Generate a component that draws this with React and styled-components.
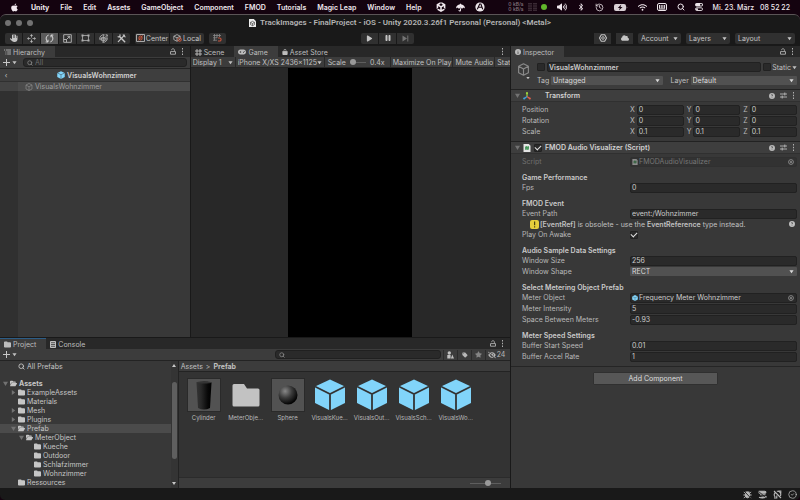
import React, { useId } from 'react';
import styled, { createGlobalStyle } from 'styled-components';
import {
  FaApple,
  FaBagShopping,
  FaBluetoothB,
  FaCircleInfo,
  FaCircleQuestion,
  FaCloud,
  FaEyeSlash,
  FaFolder,
  FaFolderOpen,
  FaGamepad,
  FaHand,
  FaPause,
  FaPlay,
  FaStar,
  FaTag,
  FaUmbrella,
  FaUnity,
  FaVolumeHigh,
  FaWifi,
} from 'react-icons/fa6';
import { CircleCheck, History, Search } from 'lucide-react';

const GlobalStyle = createGlobalStyle`
  * { box-sizing: border-box; }

  body {
    margin: 0;
    background: #14030f;
    color: #c0c0c0;
    font: 400 7px/9px Inter, "Liberation Sans", sans-serif;
  }

  button, input, select {
    margin: 0;
    padding: 0;
    border: 0;
    background: none;
    color: inherit;
    font: inherit;
  }

  ul { margin: 0; padding: 0; list-style: none; }

  h2, h3 { margin: 0; font: inherit; }

  svg { display: block; flex: none; }
`;

const Screen = styled.div`
  display: flex;
  flex-direction: column;
  height: 100vh;
  overflow: hidden;
`;

const MenuBar = styled.header`
  display: flex;
  align-items: center;
  justify-content: space-between;
  height: 14px;
  flex: none;
  padding: 0 10px;
  color: #f0e8ee;
  font-weight: 500;
  white-space: nowrap;
`;

const Menus = styled.nav`
  display: flex;
  align-items: center;
  gap: 11px;
`;

const MenuList = styled.div`
  display: flex;
  align-items: center;
  gap: 11px;
  padding-left: 1px;
`;

const MenuExtras = styled.div`
  display: flex;
  align-items: center;
  gap: 10px;
  padding-left: 3px;
`;

const MenuItem = styled.button`
  font-weight: ${({ $bold }) => ($bold ? 700 : 600)};
`;

const StatusItems = styled.div`
  display: flex;
  align-items: center;
  gap: 10px;
`;

const NetworkStatus = styled.div`
  display: flex;
  align-items: center;
  gap: 4px;
`;

const Traffic = styled.span`
  color: #86767f;
  font-size: 5px;
  line-height: 5px;
`;

const GreenDot = styled.span`
  width: 6px;
  height: 6px;
  border-radius: 50%;
  background: #61b52b;
`;

const Clock = styled.span`
  display: flex;
  gap: 6px;
`;

const Window = styled.main`
  display: flex;
  flex-direction: column;
  flex: 1;
  min-height: 0;
  border-top: 1px solid #5b5557;
  border-radius: 6px 6px 5px 5px;
  background: #191919;
  overflow: hidden;
`;

const TitleBar = styled.div`
  display: grid;
  grid-template-columns: 1fr auto 1fr;
  align-items: center;
  height: 15px;
  flex: none;
  padding: 0 5px;
`;

const Lights = styled.div`
  display: flex;
  gap: 5px;
`;

const Light = styled.span`
  width: 6px;
  height: 6px;
  border-radius: 50%;
  background: #727272;
`;

const Title = styled.div`
  display: flex;
  align-items: center;
  gap: 4px;
  color: #b4b4b4;
  font: 600 8px/10px Roboto, "Liberation Sans", sans-serif;
  white-space: nowrap;
`;

const Toolbar = styled.div`
  display: grid;
  grid-template-columns: minmax(0, 357fr) auto minmax(0, 382fr);
  align-items: center;
  height: 16px;
  flex: none;
  padding: 0 5px;
`;

const ToolSide = styled.div`
  display: flex;
  align-items: center;
  justify-content: ${({ $end }) => ($end ? 'flex-end' : 'flex-start')};
  gap: 5px;
`;

const ToolGroup = styled.div`
  display: flex;
  gap: 1px;
  border-radius: 2px;
  overflow: hidden;
`;

const ToolButton = styled.button`
  display: flex;
  align-items: center;
  justify-content: ${({ $menu }) => ($menu ? 'space-between' : 'center')};
  gap: 1px;
  width: ${({ $width }) => $width || 17}px;
  height: 11px;
  padding: 0 ${({ $menu }) => ($menu ? 3 : 0)}px;
  border-radius: ${({ $menu }) => ($menu ? 2 : 0)}px;
  background: ${({ $active }) => ($active ? '#5c5c5c' : '#303030')};
  color: ${({ $dim }) => ($dim ? '#747474' : '#c4c4c4')};
`;

const Workspace = styled.div`
  display: grid;
  grid-template-columns: minmax(0, 510fr) minmax(0, 289fr);
  gap: 1px;
  flex: 1;
  min-height: 0;
`;

const LeftSide = styled.div`
  display: grid;
  grid-template-rows: minmax(0, 291fr) minmax(0, 150fr);
  gap: 1px;
  min-height: 0;
`;

const TopPanels = styled.div`
  display: grid;
  grid-template-columns: minmax(0, 190fr) minmax(0, 320fr);
  gap: 1px;
  min-height: 0;
`;

const Panel = styled.section`
  display: flex;
  flex-direction: column;
  min-width: 0;
  min-height: 0;
  background: #383838;
  overflow: hidden;
`;

const TabBar = styled.div`
  display: flex;
  align-items: stretch;
  height: 11px;
  flex: none;
  background: #282828;
`;

const Tab = styled.button`
  display: flex;
  align-items: center;
  gap: 2px;
  padding: 0 10px 0 4px;
  border-top: 1px solid ${({ $focused }) => ($focused ? '#2c5d87' : 'transparent')};
  background: ${({ $active }) => ($active ? '#3c3c3c' : 'transparent')};
  color: #bdbdbd;
`;

const TabActions = styled.div`
  display: flex;
  align-items: center;
  gap: 5px;
  margin-left: auto;
  padding-right: 6px;
`;

const PanelBar = styled.div`
  display: flex;
  align-items: center;
  gap: ${({ $gap }) => $gap || 0}px;
  height: ${({ $tall }) => ($tall ? 12 : 11)}px;
  flex: none;
  padding: 0 ${({ $pad }) => $pad || 0}px;
  border-bottom: 1px solid #232323;
  background: #3c3c3c;
`;

const AddButton = styled.button`
  display: flex;
  align-items: center;
  gap: 2px;
  width: 16px;
`;

const SearchBox = styled.label`
  display: flex;
  align-items: center;
  gap: 2px;
  height: 9px;
  flex: ${({ $width }) => ($width ? `0 0 ${$width}` : 1)};
  margin-left: ${({ $width }) => ($width ? 'auto' : 0)};
  padding: 0 3px;
  border: 1px solid #202020;
  border-radius: 3px;
  background: #2a2a2a;
  color: #8c8c8c;

  input {
    width: 100%;
    min-width: 0;
    height: 7px;
    outline: none;
  }

  input::placeholder { color: #6a6a6a; opacity: 1; }
`;

const FilterButtons = styled.div`
  display: flex;
  padding-left: 2px;
`;

const FilterButton = styled.button`
  display: flex;
  align-items: center;
  justify-content: center;
  gap: 1px;
  width: ${({ $wide }) => ($wide ? 22 : 14)}px;
  height: 10px;
  border-left: 1px solid #2b2b2b;
  color: #b8b8b8;
`;

const PrefabHeader = styled.div`
  display: grid;
  grid-template-columns: 6px 1fr;
  align-items: center;
  height: 13px;
  flex: none;
  padding: 0 3px;
  background: #3e3e3e;
  border-bottom: 1px solid #303030;
`;

const PrefabName = styled.h2`
  display: flex;
  align-items: center;
  justify-content: center;
  gap: 2px;
  padding-right: 2px;
  color: #d2d2d2;
  font-weight: 600;
`;

const HierarchyBody = styled.div`
  flex: 1;
  background: linear-gradient(to right, #303030 18px, #383838 18px);
`;

const HierarchyRow = styled.button`
  display: flex;
  align-items: center;
  gap: 2px;
  width: 100%;
  height: 9px;
  padding-left: 25px;
  background: linear-gradient(to right, #434343 18px, #4b4b4b 18px);
  color: #a0a0a0;
`;

const BarSelectWrap = styled.span`
  display: flex;
  align-items: center;
  width: ${({ $width }) => $width}px;
  flex: none;
  height: 10px;
  padding: 0 2px;
  border-right: 1px solid #282828;

  select {
    flex: 1;
    min-width: 0;
    height: 9px;
    appearance: none;
    overflow: hidden;
    outline: none;
  }
`;

const ScaleControl = styled.label`
  display: flex;
  align-items: center;
  gap: 4px;
  width: 66px;
  height: 10px;
  flex: none;
  padding-left: 3px;
  border-right: 1px solid #282828;
`;

const Slider = styled.input`
  width: ${({ $width }) => $width}px;
  height: 7px;
  appearance: none;
  background: linear-gradient(#5e5e5e, #5e5e5e) center / 100% 1px no-repeat;

  &::-webkit-slider-thumb {
    appearance: none;
    width: 6px;
    height: 6px;
    border-radius: 50%;
    background: #999;
  }
`;

const BarToggle = styled.button`
  height: 10px;
  flex: none;
  padding: 0 1px 0 2px;
  border-right: 1px solid #282828;
  white-space: nowrap;
`;

const GameView = styled.div`
  display: flex;
  justify-content: center;
  flex: 1;
  min-height: 0;
  background: #282828;
`;

const GameScreen = styled.div`
  height: 100%;
  aspect-ratio: 1125 / 2436;
  background: #000;
`;

const ProjectBody = styled.div`
  display: grid;
  grid-template-columns: minmax(0, 178fr) minmax(0, 332fr);
  gap: 1px;
  flex: 1;
  min-height: 0;
  background: #232323;
`;

const TreePane = styled.div`
  display: grid;
  grid-template-columns: minmax(0, 1fr) 7px;
  min-height: 0;
  background: #383838;
`;

const Tree = styled.ul`
  padding-top: 1px;
  overflow: hidden;
`;

const TreeRow = styled.button`
  display: flex;
  align-items: center;
  gap: 2px;
  width: 100%;
  height: 9px;
  padding-left: ${({ $level }) => 2 + $level * 8}px;
  background: ${({ $selected }) => ($selected ? '#4b4b4b' : 'transparent')};
  color: #c6c6c6;
  font-weight: ${({ $bold }) => ($bold ? 700 : 400)};
`;

const FavouriteItem = styled.li`
  margin-bottom: 8px;
`;

const ArrowSlot = styled.span`
  display: flex;
  justify-content: center;
  width: 6px;
  color: #727272;
`;

const Scrollbar = styled.div`
  display: flex;
  flex-direction: column;
  align-items: center;
  padding: 3px 0;
  background: #343434;
`;

const ScrollTrack = styled.div`
  display: grid;
  grid-template-rows: 15fr 75fr 23fr;
  flex: 1;
  width: 5px;

  &::before { content: ''; }
`;

const ScrollThumb = styled.div`
  border-radius: 3px;
  background: #5f5f5f;
`;

const AssetPane = styled.div`
  display: flex;
  flex-direction: column;
  min-height: 0;
  background: #333;
`;

const AssetGrid = styled.div`
  display: flex;
  flex-wrap: wrap;
  align-content: flex-start;
  flex: 1;
  min-height: 0;
  padding: 6px 4px;
`;

const Asset = styled.button`
  display: flex;
  flex-direction: column;
  align-items: center;
  gap: 2px;
  width: 42px;
  color: #b9b9b9;
  font-size: 6px;
  line-height: 8px;
`;

const Thumb = styled.span`
  display: flex;
  align-items: center;
  justify-content: center;
  width: 34px;
  height: 34px;
  border: 1px solid ${({ $framed }) => ($framed ? '#2a2a2a' : 'transparent')};
  background: ${({ $framed }) => ($framed ? '#525252' : 'transparent')};
`;

const PaneFooter = styled.div`
  display: flex;
  align-items: center;
  justify-content: flex-end;
  height: 11px;
  flex: none;
  padding-right: 9px;
  border-top: 1px solid #2b2b2b;
  background: #3c3c3c;
`;

const ObjectHeader = styled.div`
  display: grid;
  grid-template-columns: 16px minmax(0, 1fr);
  gap: 7px;
  padding: 5px 3px 4px 3px;
  background: #3c3c3c;
`;

const ObjectRows = styled.div`
  display: flex;
  flex-direction: column;
  gap: 3px;
`;

const ObjectRow = styled.div`
  display: flex;
  align-items: center;
  gap: ${({ $gap }) => $gap || 2}px;
  height: 10px;
`;

const ObjectIcon = styled.div`
  display: flex;
  flex-direction: column;
  align-items: flex-end;
  padding-top: 1px;
`;

const StaticToggle = styled.label`
  display: flex;
  align-items: center;
  gap: 1px;
`;

const TextInput = styled.input`
  flex: 1;
  width: 100%;
  min-width: 0;
  height: 10px;
  padding: 0 1px;
  border: 1px solid #212121;
  border-radius: 2px;
  background: #2a2a2a;
  color: #cacaca;
  font-weight: ${({ $bold }) => ($bold ? 600 : 400)};
  outline: none;
`;

const Check = styled.input`
  display: grid;
  place-items: center;
  width: 8px;
  height: 8px;
  flex: none;
  border: 1px solid #212121;
  border-radius: 1px;
  appearance: none;
  background: #2a2a2a;

  &:checked::before {
    content: '';
    width: 5px;
    height: 3px;
    margin-bottom: 1px;
    border: solid #dedede;
    border-width: 0 0 1px 1px;
    rotate: -45deg;
  }
`;

const SelectWrap = styled.span`
  display: flex;
  align-items: center;
  flex: 1;
  min-width: 0;
  height: 9px;
  padding: 0 3px 0 2px;
  border-radius: 1px;
  background: #515151;
  color: #dadada;

  select {
    flex: 1;
    min-width: 0;
    height: 9px;
    appearance: none;
    outline: none;
  }
`;

const TagLabel = styled.label`
  width: ${({ $width }) => $width}px;
  flex: none;
`;

const TagCell = styled.div`
  display: flex;
  align-items: center;
  flex: ${({ $grow }) => $grow};
  min-width: 0;
`;

const ComponentHeader = styled.div`
  display: flex;
  align-items: center;
  gap: 3px;
  height: 13px;
  flex: none;
  padding: 0 5px 0 3px;
  border-top: 1px solid #222;
  border-bottom: 1px solid #303030;
  background: #3e3e3e;
`;

const ComponentTitle = styled.h2`
  padding-left: ${({ $indent }) => ($indent ? 11 : 0)}px;
  color: #d2d2d2;
  font-weight: 600;
`;

const HeaderActions = styled.div`
  display: flex;
  align-items: center;
  gap: 5px;
  margin-left: auto;
  color: #b8b8b8;
`;

const Fields = styled.div`
  display: flex;
  flex-direction: column;
  padding: 2px 3px 4px 11px;
`;

const FieldGroup = styled.div`
  margin-top: 5px;
`;

const GroupTitle = styled.h3`
  height: 10px;
  color: #cacaca;
  font-weight: 600;
  line-height: 11px;
`;

const Row = styled.div`
  display: grid;
  grid-template-columns: minmax(0, 108fr) minmax(0, 167fr);
  align-items: center;
  height: 11px;
  color: ${({ $disabled }) => ($disabled ? '#707070' : '#b8b8b8')};
`;

const VectorCells = styled.div`
  display: grid;
  grid-template-columns: repeat(3, minmax(0, 1fr));
  gap: 3px;

  label {
    display: flex;
    align-items: center;
    gap: 2px;
  }
`;

const ObjectField = styled.div`
  display: flex;
  align-items: center;
  height: 10px;
  padding: 0 2px 0 1px;
  border: 1px solid ${({ $disabled }) => ($disabled ? '#303030' : '#212121')};
  border-radius: 2px;
  background: ${({ $disabled }) => ($disabled ? '#323232' : '#2a2a2a')};

  input {
    flex: 1;
    min-width: 0;
    height: 8px;
    padding-left: 1px;
    color: ${({ $disabled }) => ($disabled ? '#777' : '#cacaca')};
    outline: none;
  }
`;

const Notice = styled.p`
  display: flex;
  align-items: center;
  gap: 1px;
  height: 10px;
  margin: 0;
  padding-left: 8px;
  color: #c0c0c0;

  b { font-weight: 600; }

  > svg:last-child { margin-left: auto; margin-right: 2px; }
`;

const AddArea = styled.div`
  display: flex;
  justify-content: center;
  padding: 5px;
  border-top: 1px solid #252525;
`;

const AddComponentButton = styled.button`
  width: 45%;
  height: 13px;
  border: 1px solid #303030;
  border-radius: 1px;
  background: #575757;
  color: #dedede;
`;

const StatusBar = styled.footer`
  display: flex;
  align-items: center;
  justify-content: flex-end;
  gap: 6px;
  height: 12px;
  flex: none;
  padding: 0 3px;
  color: #b8b8b8;
`;

const Caret = ({ size = 5 }) => (
  <svg width={size} height={size} viewBox="0 0 6 6" fill="currentColor">
    <path d="M0.5 1.5h5L3 5z" />
  </svg>
);

const Fold = ({ open }) => (
  <svg width="5" height="5" viewBox="0 0 6 6" fill="currentColor">
    <path d={open ? 'M0 1h6L3 6z' : 'M1 0l4 3-4 3z'} />
  </svg>
);

const Dots = () => (
  <svg width="3" height="7" viewBox="0 0 3 7" fill="#b0b0b0">
    <path d="M1 0h1v1.4H1zM1 2.8h1v1.4H1zM1 5.6h1V7H1z" />
  </svg>
);

const Lock = () => (
  <svg width="6" height="7" viewBox="0 0 6 7" fill="none" stroke="#b0b0b0" strokeWidth="0.9">
    <path d="M1.6 2.2C1.6 0.2 4.4 0.2 4.4 2.2V3.5M0.5 3.6h5v2.6h-5z" />
  </svg>
);

const Plus = () => (
  <svg width="7" height="7" viewBox="0 0 7 7" stroke="#c8c8c8" strokeWidth="1">
    <path d="M3.5 0v7M0 3.5h7" />
  </svg>
);

const CubeSolid = ({ size = 8, gap = '#383838' }) => (
  <svg width={size} height={size} viewBox="0 0 32 32">
    <path d="M16 0.5L31 7.5V24L16 31.5 1 24V7.5z" fill="#81d4fa" />
    <path d="M1 7.5L16 15 31 7.5M16 15v17" fill="none" stroke={gap} strokeWidth="1.8" />
  </svg>
);

const CubeOutline = ({ size = 8, color = '#8a8a8a' }) => (
  <svg width={size} height={size} viewBox="0 0 16 16" fill="none" stroke={color} strokeWidth="1.4" strokeLinejoin="round">
    <path d="M8 1l6 3v8l-6 3-6-3V4zM2 4l6 3.5 6-3.5M8 7.5V15" />
  </svg>
);

const ListIcon = () => (
  <svg width="7" height="6" viewBox="0 0 7 6" stroke="#b8b8b8" strokeWidth="0.9">
    <path d="M0 1h1.2M2 1h5M1.4 3h1M3.2 3H7M1.4 5h1M3.2 5H7" />
  </svg>
);

const HashIcon = () => (
  <svg width="7" height="7" viewBox="0 0 7 7" stroke="#c0c0c0" strokeWidth="0.9">
    <path d="M2 0v7M5 0v7M0 2h7M0 5h7" />
  </svg>
);

const ConsoleIcon = () => (
  <svg width="6" height="7" viewBox="0 0 6 7">
    <rect width="6" height="7" rx="0.8" fill="#c0c0c0" />
    <path d="M1 1.7h4M1 3.5h4M1 5.3h4" stroke="#3a3a3a" strokeWidth="0.8" />
  </svg>
);

const DocIcon = () => (
  <svg width="7" height="8" viewBox="0 0 7 8">
    <path d="M0 0h4.8L7 2.2V8H0z" fill="#ededed" />
    <path d="M3.5 2.3L5.5 3.4v2.2l-2 1.1-2-1.1V3.4zM1.5 3.4l2 1.1 2-1.1M3.5 4.5v2.2" fill="none" stroke="#333" strokeWidth="0.6" />
  </svg>
);

const ScriptIcon = ({ size = 8, dim }) => (
  <svg width={size} height={size} viewBox="0 0 8 8" opacity={dim ? 0.5 : 1}>
    <path d="M0.5 0h5.3L7.5 1.7V8h-7z" fill="#e4e4e4" />
    <path d="M3.3 2L2.9 6M5.2 2L4.8 6M2 3.3h4M2 4.8h4" stroke="#2c8a45" strokeWidth="0.9" />
  </svg>
);

const MoveToolIcon = () => (
  <svg width="9" height="9" viewBox="0 0 9 9" fill="#b8b8b8">
    <path d="M4.5 0L6 1.9H3zM4.5 9L6 7.1H3zM0 4.5L1.9 3v3zM9 4.5L7.1 3v3z" />
    <path d="M4.5 1.8v1.7M4.5 5.5v1.7M1.8 4.5h1.7M5.5 4.5h1.7" stroke="#b8b8b8" strokeWidth="0.8" />
  </svg>
);

const RotateToolIcon = () => (
  <svg width="9" height="9" viewBox="0 0 9 9" fill="none" stroke="#e0e0e0" strokeWidth="1">
    <path d="M3.6 1.1C0.6 2 0.5 6 2.6 7.6M5.4 7.9C8.4 7 8.5 3 6.4 1.4" />
    <path d="M0.7 7.9h2.3V5.7M8.3 1.1H6v2.2" />
  </svg>
);

const ScaleToolIcon = () => (
  <svg width="9" height="9" viewBox="0 0 9 9" fill="none" stroke="#b8b8b8" strokeWidth="0.9">
    <path d="M0.7 0.7h7.6v7.6H0.7z" />
    <path d="M0.7 5.5h2.8v2.8M3.5 5.5L6.6 2.4M4.4 2.3h2.3v2.3" />
  </svg>
);

const RectToolIcon = () => (
  <svg width="9" height="8" viewBox="0 0 9 8" fill="none" stroke="#b0b0b0" strokeWidth="0.8">
    <path d="M1.5 1.5h6v5h-6z" />
    <path d="M0.5 0.5h2v2h-2zM6.5 0.5h2v2h-2zM0.5 5.5h2v2h-2zM6.5 5.5h2v2h-2z" fill="#b0b0b0" stroke="none" />
  </svg>
);

const TransformToolIcon = () => (
  <svg width="9" height="9" viewBox="0 0 9 9" fill="none" stroke="#b8b8b8" strokeWidth="0.8">
    <path d="M1.2 6.2A3.7 3.7 0 0 1 5.8 1M7.8 2.8A3.7 3.7 0 0 1 3.2 8" />
    <path d="M2.6 3.4h3.5v3.2H2.6zM4.3 0.5v8M0.6 4.9h7.8M6.1 3.4l2.2-2.3M6.5 0.8h1.8v1.8" />
  </svg>
);

const CrossedTools = () => (
  <svg width="9" height="9" viewBox="0 0 9 9" stroke="#c6c6c6" fill="none" strokeLinecap="round">
    <path d="M2.5 2.5L7.7 7.7" strokeWidth="1.5" />
    <path d="M7.5 1.2L1.3 7.6" strokeWidth="1.2" />
    <path d="M1 2.7a1.5 1.5 0 0 0 2-1.9M6.2 0.9l1.9 1.9" strokeWidth="1.1" />
  </svg>
);

const PivotIcon = () => (
  <svg width="9" height="8" viewBox="0 0 9 8" fill="none">
    <path d="M0.5 0.5h8v7h-8z" stroke="#b8b8b8" strokeWidth="0.9" />
    <ellipse cx="4.5" cy="4" rx="1.6" ry="2" stroke="#dc5a3c" strokeWidth="0.9" />
    <path d="M2.6 6.4l4-5" stroke="#dc5a3c" strokeWidth="0.8" />
  </svg>
);

const LocalIcon = () => (
  <svg width="9" height="8" viewBox="0 0 9 8" fill="none">
    <path d="M4 0.6l3.2 1.6v3L4 7.3 0.8 5.6V2.2zM0.8 2.2L4 3.8l3.2-1.6M4 3.8v3.4" stroke="#b8b8b8" strokeWidth="0.8" />
    <circle cx="6.6" cy="5.6" r="1.7" stroke="#dc5a3c" strokeWidth="0.9" />
  </svg>
);

const SnapIcon = () => (
  <svg width="9" height="8" viewBox="0 0 9 8" fill="none">
    <path d="M1.5 0v6.5M4 0v4M6.5 0v3M0 1.5h8M0 3.8h4M0 6.2h4" stroke="#8a8a8a" strokeWidth="0.8" />
    <path d="M5 4h1.6a1.5 1.5 0 0 1 0 3H5" stroke="#c8533a" strokeWidth="1.1" />
  </svg>
);

const StepIcon = () => (
  <svg width="7" height="7" viewBox="0 0 7 7" fill="currentColor">
    <path d="M0.5 0.5L5 3.5l-4.5 3zM5.3 0.5h1v6h-1z" />
  </svg>
);

const CollabIcon = () => (
  <svg width="8" height="8" viewBox="0 0 8 8" fill="none" stroke="currentColor">
    <path d="M2.3 0.7h3.4L7.5 4 5.7 7.3H2.3L0.5 4z" strokeWidth="1.1" />
    <circle cx="4" cy="4" r="1.3" strokeWidth="0.9" />
  </svg>
);

const AxesIcon = () => (
  <svg width="8" height="8" viewBox="0 0 8 8">
    <path d="M4 4.5V1" stroke="#9bd43b" strokeWidth="1.2" />
    <path d="M4 4.5L6.7 6.4" stroke="#e5604a" strokeWidth="1.2" />
    <path d="M4 4.5L1.3 6.4" stroke="#3fa2dd" strokeWidth="1.2" />
    <circle cx="4" cy="1.2" r="1.1" fill="#9bd43b" />
    <circle cx="6.8" cy="6.5" r="1.1" fill="#e5604a" />
    <circle cx="1.2" cy="6.5" r="1.1" fill="#3fa2dd" />
  </svg>
);

const PresetIcon = () => (
  <svg width="7" height="7" viewBox="0 0 7 7" stroke="#b8b8b8" strokeWidth="0.9">
    <path d="M0 2h7M0 5h7M4.8 0.5v3M2.2 3.5v3" />
  </svg>
);

const PickerIcon = () => (
  <svg width="6" height="6" viewBox="0 0 6 6" fill="none" stroke="#9a9a9a" strokeWidth="0.8">
    <circle cx="3" cy="3" r="2.4" />
    <circle cx="3" cy="3" r="0.6" fill="#9a9a9a" />
  </svg>
);

const WarningIcon = () => (
  <svg width="9" height="9" viewBox="0 0 9 9">
    <rect width="9" height="9" rx="2" fill="#e5ce3c" />
    <path d="M4 1.5h1.2v3.8H4zM4 6.3h1.2v1.3H4z" fill="#4b430f" />
  </svg>
);

const FmodIcon = () => (
  <svg width="10" height="10" viewBox="0 0 10 10">
    <circle cx="5" cy="5" r="4.6" fill="#ece6ea" />
    <path d="M2.3 7.3L4.7 2h1.2l1.8 5.3M3.8 5.2h3" fill="none" stroke="#14030f" strokeWidth="1.1" />
  </svg>
);

const GridDots = () => (
  <svg width="9" height="8" viewBox="0 0 9 8" stroke="#5a4a54" strokeDasharray="1.5 0.7">
    <path d="M1 0v8M3 0v8M6 0v8M8 0v8" strokeWidth="1.1" />
  </svg>
);

const BatteryIcon = () => (
  <svg width="14" height="7" viewBox="0 0 14 7">
    <rect x="0" y="0" width="12" height="7" rx="2" fill="#d8d0d5" />
    <path d="M12.7 2.2Q14 3.5 12.7 4.8z" fill="#d8d0d5" />
    <path d="M7.3 0.5L3.8 4h2L4.9 6.6 8.5 3.1h-2z" fill="#14030f" />
  </svg>
);

const KeyboardBox = () => (
  <svg width="10" height="8" viewBox="0 0 10 8">
    <rect x="0.5" y="0.5" width="9" height="7" rx="1.5" fill="none" stroke="#ece6ea" />
    <path d="M2.5 2v3.5M4.2 2v3.5M5.9 2v3.5M7.6 2v3.5M2 6h6" stroke="#ece6ea" />
  </svg>
);

const ControlCenter = () => (
  <svg width="8" height="8" viewBox="0 0 8 8">
    <rect x="0" y="0" width="8" height="3.5" rx="1.7" fill="#ece6ea" />
    <circle cx="6" cy="1.75" r="1" fill="#14030f" />
    <rect x="0.5" y="4.8" width="7" height="2.7" rx="1.3" fill="none" stroke="#ece6ea" strokeWidth="0.9" />
    <circle cx="2" cy="6.15" r="1" fill="#ece6ea" />
  </svg>
);

const ShapesIcon = () => (
  <svg width="7" height="8" viewBox="0 0 7 8" fill="#c0c0c0">
    <circle cx="2.3" cy="2" r="1.7" />
    <path d="M0.3 3.9h3.3v3.6H0.3zM5.3 3.5L7 7.5H3.9z" />
  </svg>
);

const BugMuted = () => (
  <svg width="9" height="9" viewBox="0 0 9 9" fill="none" stroke="currentColor" strokeWidth="0.9">
    <ellipse cx="4.5" cy="4.8" rx="2.3" ry="3" fill="currentColor" />
    <path d="M0.8 2l1.8 1.2M8.2 2L6.4 3.2M0.3 5h2M8.7 5h-2M0.8 8l1.8-1.4M8.2 8L6.4 6.6M3 1.4l0.7 0.8M6 1.4l-0.7 0.8" />
    <path d="M1.2 1.2l6.6 6.9" stroke="#191919" />
  </svg>
);

const CacheMuted = () => (
  <svg width="9" height="9" viewBox="0 0 9 9" fill="none" stroke="currentColor" strokeWidth="1.1">
    <path d="M1.2 1.2h5.5q1.2 0 1.2 1t-1.2 1H2q-1 0-1-1zM2 4.8h5.5M1 7.2q3 1.5 7 0V6" fill="currentColor" />
    <path d="M0.8 1.7l7 5.8" stroke="#191919" strokeWidth="0.8" />
  </svg>
);

const RefreshMuted = () => (
  <svg width="9" height="9" viewBox="0 0 9 9" fill="none" stroke="currentColor" strokeWidth="1.1">
    <path d="M2.2 7A3.2 3.2 0 0 1 2 2.8M3.8 1.3A3.2 3.2 0 0 1 7.3 6M5.2 1h2.6v2.5M1 8h2.8V5.5M1 1l7 7" />
  </svg>
);

const CylinderPreview = () => (
  <svg width="32" height="32" viewBox="0 0 32 32">
    <defs>
      <linearGradient id="cylinder">
        <stop offset="0" stopColor="#333" />
        <stop offset="0.3" stopColor="#292929" />
        <stop offset="0.75" stopColor="#080808" />
        <stop offset="1" stopColor="#000" />
      </linearGradient>
    </defs>
    <path d="M8.5 3.5Q16 1.5 23.5 3.5L22 29Q16 32 10 29z" fill="url(#cylinder)" />
    <ellipse cx="16" cy="3.5" rx="7.5" ry="1" fill="#343434" />
  </svg>
);

const SpherePreview = () => (
  <svg width="32" height="32" viewBox="0 0 32 32">
    <defs>
      <radialGradient id="sphere" cx="0.35" cy="0.3" r="0.7">
        <stop offset="0" stopColor="#888" />
        <stop offset="0.5" stopColor="#3c3c3c" />
        <stop offset="1" stopColor="#040404" />
      </radialGradient>
    </defs>
    <circle cx="16" cy="16" r="9.5" fill="url(#sphere)" />
  </svg>
);

const FolderPreview = () => (
  <svg width="28" height="24" viewBox="0 0 28 24">
    <path d="M2 1h10l3 4.5h11q1.5 0 1.5 1.5v15q0 1.5-1.5 1.5H2q-1.5 0-1.5-1.5V2.5Q0.5 1 2 1z" fill="#c2c2c2" />
  </svg>
);

const menus = ['File', 'Edit', 'Assets', 'GameObject', 'Component', 'FMOD', 'Tutorials', 'Magic Leap', 'Window', 'Help'];

const tools = [
  { name: 'Hand', icon: <FaHand size={8} /> },
  { name: 'Move', icon: <MoveToolIcon /> },
  { name: 'Rotate', icon: <RotateToolIcon />, active: true },
  { name: 'Scale', icon: <ScaleToolIcon /> },
  { name: 'Rect', icon: <RectToolIcon /> },
  { name: 'Transform', icon: <TransformToolIcon /> },
  { name: 'Custom', icon: <CrossedTools /> },
];

const tree = [
  { name: 'Assets', level: 0, open: true, bold: true },
  { name: 'ExampleAssets', level: 1, open: false },
  { name: 'Materials', level: 1 },
  { name: 'Mesh', level: 1, open: false },
  { name: 'Plugins', level: 1, open: false },
  { name: 'Prefab', level: 1, open: true, selected: true },
  { name: 'MeterObject', level: 2, open: true },
  { name: 'Kueche', level: 3 },
  { name: 'Outdoor', level: 3 },
  { name: 'Schlafzimmer', level: 3 },
  { name: 'Wohnzimmer', level: 3 },
  { name: 'Ressources', level: 1 },
  { name: 'Scenes', level: 1 },
];

const assets = [
  { name: 'Cylinder', preview: <CylinderPreview />, framed: true },
  { name: 'MeterObje...', preview: <FolderPreview /> },
  { name: 'Sphere', preview: <SpherePreview />, framed: true },
  { name: 'VisualsKue...', preview: <CubeSolid size={32} gap="#333" /> },
  { name: 'VisualsOut...', preview: <CubeSolid size={32} gap="#333" /> },
  { name: 'VisualsSch...', preview: <CubeSolid size={32} gap="#333" /> },
  { name: 'VisualsWo...', preview: <CubeSolid size={32} gap="#333" /> },
];

const Dropdown = ({ id, value }) => (
  <SelectWrap>
    <select id={id} defaultValue={value}>
      <option>{value}</option>
    </select>
    <Caret />
  </SelectWrap>
);

const BarDropdown = ({ label, value, width }) => (
  <BarSelectWrap $width={width}>
    <select aria-label={label} defaultValue={value}>
      <option>{value}</option>
    </select>
    <Caret />
  </BarSelectWrap>
);

const TextRow = ({ label, value }) => {
  const id = useId();
  return (
    <Row>
      <label htmlFor={id}>{label}</label>
      <TextInput id={id} defaultValue={value} />
    </Row>
  );
};

const VectorRow = ({ label, value }) => (
  <Row>
    <span>{label}</span>
    <VectorCells role="group" aria-label={label}>
      {['X', 'Y', 'Z'].map((axis) => (
        <label key={axis}>
          {axis}
          <TextInput defaultValue={value} />
        </label>
      ))}
    </VectorCells>
  </Row>
);

const ObjectRefRow = ({ label, value, icon, disabled }) => {
  const id = useId();
  return (
    <Row $disabled={disabled}>
      <label htmlFor={id}>{label}</label>
      <ObjectField $disabled={disabled}>
        {icon}
        <input id={id} defaultValue={value} readOnly disabled={disabled} />
        <PickerIcon />
      </ObjectField>
    </Row>
  );
};

const ComponentActions = () => (
  <HeaderActions>
    <FaCircleQuestion size={6} />
    <PresetIcon />
    <Dots />
  </HeaderActions>
);

const Hierarchy = () => (
  <Panel>
    <TabBar>
      <Tab $active><ListIcon /> Hierarchy</Tab>
      <TabActions><Lock /><Dots /></TabActions>
    </TabBar>
    <PanelBar $tall $pad={3} $gap={4}>
      <AddButton aria-label="Create"><Plus /><Caret /></AddButton>
      <SearchBox>
        <Search size={6} strokeWidth={3} />
        <input placeholder="All" aria-label="Search hierarchy" />
      </SearchBox>
    </PanelBar>
    <PrefabHeader>
      <button aria-label="Back">‹</button>
      <PrefabName><CubeSolid /> VisualsWohnzimmer</PrefabName>
    </PrefabHeader>
    <HierarchyBody>
      <HierarchyRow><CubeOutline /> VisualsWohnzimmer</HierarchyRow>
    </HierarchyBody>
  </Panel>
);

const Game = () => (
  <Panel>
    <TabBar>
      <Tab><HashIcon /> Scene</Tab>
      <Tab $active><FaGamepad size={8} /> Game</Tab>
      <Tab><FaBagShopping size={6} /> Asset Store</Tab>
      <TabActions><Dots /></TabActions>
    </TabBar>
    <PanelBar>
      <BarDropdown label="Display" value="Display 1" width={45} />
      <BarDropdown label="Resolution" value="iPhone X/XS 2436x1125 Portrait" width={89} />
      <ScaleControl>
        Scale
        <Slider type="range" min="0" max="100" defaultValue="0" $width={16} />
        0.4x
      </ScaleControl>
      <BarToggle>Maximize On Play</BarToggle>
      <BarToggle>Mute Audio</BarToggle>
      <BarToggle>Stats</BarToggle>
    </PanelBar>
    <GameView><GameScreen /></GameView>
  </Panel>
);

const Project = () => (
  <Panel>
    <TabBar>
      <Tab $active $focused><FaFolder size={7} /> Project</Tab>
      <Tab><ConsoleIcon /> Console</Tab>
      <TabActions><Lock /><Dots /></TabActions>
    </TabBar>
    <PanelBar $tall $pad={3}>
      <AddButton aria-label="Create"><Plus /><Caret /></AddButton>
      <SearchBox $width="33%">
        <Search size={6} strokeWidth={3} />
        <input aria-label="Search project" />
      </SearchBox>
      <FilterButtons>
        <FilterButton aria-label="Search by type"><ShapesIcon /></FilterButton>
        <FilterButton aria-label="Search by label"><FaTag size={6} /></FilterButton>
        <FilterButton aria-label="Save search"><FaStar size={7} color="#858585" /></FilterButton>
        <FilterButton aria-label="Hidden packages" $wide><FaEyeSlash size={8} /> 24</FilterButton>
      </FilterButtons>
    </PanelBar>
    <ProjectBody>
      <TreePane>
        <Tree>
          <FavouriteItem>
            <TreeRow $level={1}><ArrowSlot /><Search size={7} strokeWidth={3} /> All Prefabs</TreeRow>
          </FavouriteItem>
          {tree.map((node) => (
            <li key={node.name}>
              <TreeRow $level={node.level} $bold={node.bold} $selected={node.selected}>
                <ArrowSlot>{node.open !== undefined && <Fold open={node.open} />}</ArrowSlot>
                {node.open ? <FaFolderOpen size={7} /> : <FaFolder size={7} />}
                {node.name}
              </TreeRow>
            </li>
          ))}
        </Tree>
        <Scrollbar>
          <svg width="4" height="3" viewBox="0 0 4 3" fill="#c8c8c8"><path d="M0 3l2-3 2 3z" /></svg>
          <ScrollTrack><ScrollThumb /></ScrollTrack>
          <svg width="4" height="3" viewBox="0 0 4 3" fill="#c8c8c8"><path d="M0 0l2 3 2-3z" /></svg>
        </Scrollbar>
      </TreePane>
      <AssetPane>
        <PanelBar $pad={2} $gap={3}>
          <button>Assets</button>
          <span>&gt;</span>
          <b>Prefab</b>
        </PanelBar>
        <AssetGrid>
          {assets.map((asset) => (
            <Asset key={asset.name}>
              <Thumb $framed={asset.framed}>{asset.preview}</Thumb>
              {asset.name}
            </Asset>
          ))}
        </AssetGrid>
        <PaneFooter>
          <Slider type="range" min="0" max="100" defaultValue="60" $width={31} aria-label="Icon size" />
        </PaneFooter>
      </AssetPane>
    </ProjectBody>
  </Panel>
);

const Inspector = () => (
  <Panel>
    <TabBar>
      <Tab $active><FaCircleInfo size={6} /> Inspector</Tab>
      <TabActions><Lock /><Dots /></TabActions>
    </TabBar>
    <ObjectHeader>
      <ObjectIcon><CubeOutline size={13} /><Caret size={4} /></ObjectIcon>
      <ObjectRows>
        <ObjectRow>
          <Check type="checkbox" aria-label="Active" />
          <TextInput $bold defaultValue="VisualsWohnzimmer" aria-label="Name" />
          <StaticToggle><Check type="checkbox" /> Static <Caret /></StaticToggle>
        </ObjectRow>
        <ObjectRow $gap={8}>
          <TagCell $grow={127}>
            <TagLabel htmlFor="tag" $width={14}>Tag</TagLabel>
            <Dropdown id="tag" value="Untagged" />
          </TagCell>
          <TagCell $grow={128}>
            <TagLabel htmlFor="layer" $width={20}>Layer</TagLabel>
            <Dropdown id="layer" value="Default" />
          </TagCell>
        </ObjectRow>
      </ObjectRows>
    </ObjectHeader>

    <ComponentHeader>
      <ArrowSlot><Fold open /></ArrowSlot>
      <AxesIcon />
      <ComponentTitle $indent>Transform</ComponentTitle>
      <ComponentActions />
    </ComponentHeader>
    <Fields>
      <VectorRow label="Position" value="0" />
      <VectorRow label="Rotation" value="0" />
      <VectorRow label="Scale" value="0.1" />
    </Fields>

    <ComponentHeader>
      <ArrowSlot><Fold open /></ArrowSlot>
      <ScriptIcon />
      <Check type="checkbox" defaultChecked aria-label="Enabled" />
      <ComponentTitle>FMOD Audio Visualizer (Script)</ComponentTitle>
      <ComponentActions />
    </ComponentHeader>
    <Fields>
      <ObjectRefRow label="Script" value="FMODAudioVisualizer" icon={<ScriptIcon size={6} dim />} disabled />
      <FieldGroup>
        <GroupTitle>Game Performance</GroupTitle>
        <TextRow label="Fps" value="0" />
      </FieldGroup>
      <FieldGroup>
        <GroupTitle>FMOD Event</GroupTitle>
        <TextRow label="Event Path" value="event:/Wohnzimmer" />
        <Notice>
          <WarningIcon />
          <span><b>[EventRef]</b> is obsolete - use the <b>EventReference</b> type instead.</span>
          <FaCircleQuestion size={6} />
        </Notice>
        <Row>
          <label htmlFor="awake">Play On Awake</label>
          <Check id="awake" type="checkbox" defaultChecked />
        </Row>
      </FieldGroup>
      <FieldGroup>
        <GroupTitle>Audio Sample Data Settings</GroupTitle>
        <TextRow label="Window Size" value="256" />
        <Row>
          <label htmlFor="shape">Window Shape</label>
          <Dropdown id="shape" value="RECT" />
        </Row>
      </FieldGroup>
      <FieldGroup>
        <GroupTitle>Select Metering Object Prefab</GroupTitle>
        <ObjectRefRow label="Meter Object" value="Frequency Meter Wohnzimmer" icon={<CubeSolid size={6} />} />
        <TextRow label="Meter Intensity" value="5" />
        <TextRow label="Space Between Meters" value="-0.93" />
      </FieldGroup>
      <FieldGroup>
        <GroupTitle>Meter Speed Settings</GroupTitle>
        <TextRow label="Buffer Start Speed" value="0.01" />
        <TextRow label="Buffer Accel Rate" value="1" />
      </FieldGroup>
    </Fields>
    <AddArea>
      <AddComponentButton>Add Component</AddComponentButton>
    </AddArea>
  </Panel>
);

const App = () => (
  <>
    <GlobalStyle />
    <Screen>
      <MenuBar>
        <Menus>
          <FaApple size={9} />
          <MenuList>
            <MenuItem $bold>Unity</MenuItem>
            {menus.map((menu) => <MenuItem key={menu}>{menu}</MenuItem>)}
          </MenuList>
          <MenuExtras>
            <FaUnity size={10} />
            <FaUmbrella size={9} />
            <FmodIcon />
          </MenuExtras>
        </Menus>
        <StatusItems>
          <NetworkStatus>
            <Traffic>0 kB/s<br />0 kB/s</Traffic>
            <GridDots />
            <GreenDot />
          </NetworkStatus>
          <FaVolumeHigh size={10} />
          <FaBluetoothB size={8} />
          <History size={9} strokeWidth={2} />
          <BatteryIcon />
          <FaWifi size={9} />
          <KeyboardBox />
          <Search size={8} strokeWidth={3} />
          <ControlCenter />
          <Clock><span>Mi. 23. März</span><span>08 52 22</span></Clock>
        </StatusItems>
      </MenuBar>
      <Window>
        <TitleBar>
          <Lights><Light /><Light /><Light /></Lights>
          <Title>
            <DocIcon />
            TrackImages - FinalProject - iOS - Unity 2020.3.26f1 Personal (Personal) &lt;Metal&gt;
          </Title>
        </TitleBar>
        <Toolbar>
          <ToolSide>
            <ToolGroup>
              {tools.map((tool) => (
                <ToolButton key={tool.name} aria-label={tool.name} $active={tool.active}>{tool.icon}</ToolButton>
              ))}
            </ToolGroup>
            <ToolGroup>
              <ToolButton $width={34}><PivotIcon />Center</ToolButton>
              <ToolButton $width={34}><LocalIcon />Local</ToolButton>
            </ToolGroup>
            <ToolGroup>
              <ToolButton aria-label="Snap" $dim><SnapIcon /></ToolButton>
            </ToolGroup>
          </ToolSide>
          <ToolGroup>
            <ToolButton aria-label="Play"><FaPlay size={7} /></ToolButton>
            <ToolButton aria-label="Pause"><FaPause size={8} /></ToolButton>
            <ToolButton aria-label="Step" $dim><StepIcon /></ToolButton>
          </ToolGroup>
          <ToolSide $end>
            <ToolButton aria-label="Collaborate"><CollabIcon /></ToolButton>
            <ToolButton aria-label="Services"><FaCloud size={8} /></ToolButton>
            <ToolButton $menu $width={43}>Account <Caret /></ToolButton>
            <ToolButton $menu $width={44}>Layers <Caret /></ToolButton>
            <ToolButton $menu $width={60}>Layout <Caret /></ToolButton>
          </ToolSide>
        </Toolbar>
        <Workspace>
          <LeftSide>
            <TopPanels>
              <Hierarchy />
              <Game />
            </TopPanels>
            <Project />
          </LeftSide>
          <Inspector />
        </Workspace>
        <StatusBar>
          <BugMuted />
          <CacheMuted />
          <RefreshMuted />
          <CircleCheck size={9} />
        </StatusBar>
      </Window>
    </Screen>
  </>
);

export default App;
